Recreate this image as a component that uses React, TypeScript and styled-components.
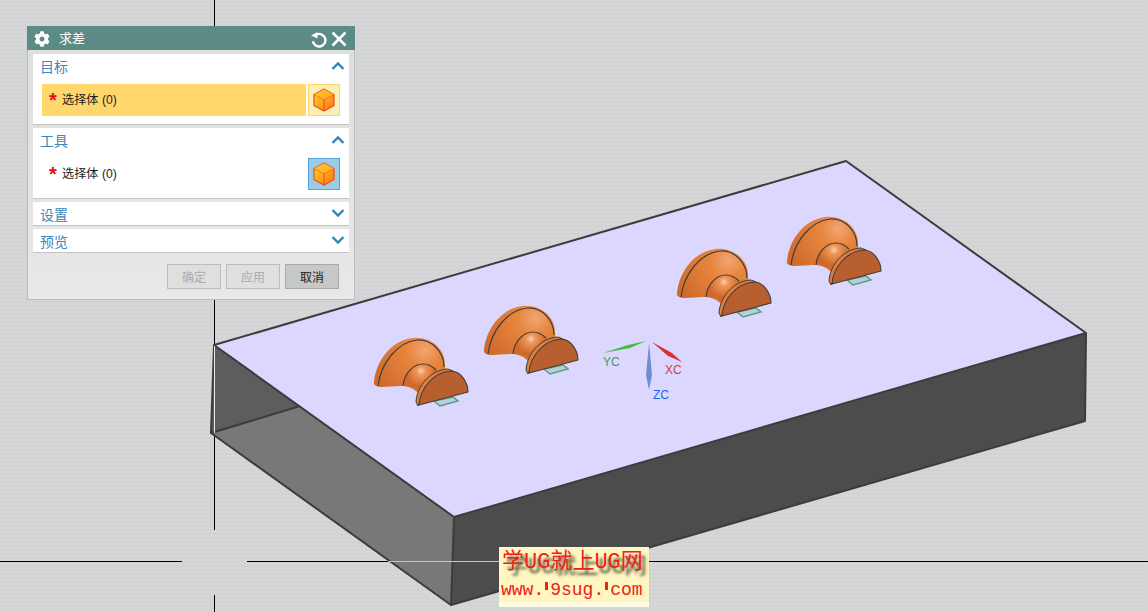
import React from "react";
import styled, { createGlobalStyle } from "styled-components";
import { FaCog } from "react-icons/fa";

const GlobalStyle = createGlobalStyle`
  html, body {
    margin: 0;
    padding: 0;
    background: #d5d6d8;
  }
`;

const CJK = `"Liberation Sans", "Noto Sans CJK SC", sans-serif`;

const Viewport = styled.div`
  position: relative;
  width: 1148px;
  height: 612px;
  overflow: hidden;
  background-color: #d5d6d8;
  background-image: radial-gradient(#cfd0d2 1px, transparent 1px);
  background-size: 4px 4px;
  font-family: ${CJK};
`;

const Canvas = styled.svg`
  display: block;
`;

const Dialog = styled.div`
  position: absolute;
  left: 27px;
  top: 26px;
  width: 328px;
  height: 274px;
  box-sizing: border-box;
  border: 1px solid #bcbcbc;
  border-top: none;
  background: linear-gradient(#dedede, #e8e8e8);
  display: flex;
  flex-direction: column;
`;

const TitleBar = styled.div`
  height: 24px;
  margin: 0 -1px;
  background: #5c8a84;
  display: flex;
  align-items: center;
  padding: 2px 7px 0 7px;
  box-sizing: border-box;
  color: #fff;
  flex-shrink: 0;
`;

const TitleText = styled.span`
  font-size: 13px;
  margin: 0 0 4px 9px;
  flex: 1;
`;

const ResetSlot = styled.span`
  display: flex;
  margin-right: 2px;
`;

const Body = styled.div`
  display: flex;
  flex-direction: column;
  gap: 3px;
  padding: 4px 5px 0;
`;

const Section = styled.div<{ $open?: boolean }>`
  height: ${(p) => (p.$open ? "71px" : "24px")};
  box-sizing: border-box;
  background: #fff;
  border-bottom: 1px solid #c4c4c4;
`;

const SectionHead = styled.div`
  height: 23px;
  padding: 0 4px 0 7px;
  display: flex;
  align-items: center;
  justify-content: space-between;
  color: #3b87b8;
  font-size: 14px;
  line-height: 23px;
`;

const SectionLabel = styled.span`
  position: relative;
  top: 2px;
`;

const Row = styled.div`
  display: flex;
  gap: 2px;
  margin: 7px 0 0 9px;
`;

const Field = styled.div<{ $active?: boolean }>`
  width: 264px;
  height: 32px;
  background: ${(p) => (p.$active ? "#ffd76c" : "#fff")};
  display: flex;
  align-items: center;
  padding: 0 0 3px 7px;
  box-sizing: border-box;
  font-size: 12.2px;
  color: #1c1c1c;
`;

const Star = styled.span`
  color: #e0101a;
  font-family: "Liberation Sans", sans-serif;
  font-weight: 700;
  font-size: 20px;
  line-height: 18px;
  width: 13px;
  position: relative;
  top: 1px;
`;

const IconButton = styled.div<{ $active?: boolean }>`
  width: 32px;
  height: 32px;
  box-sizing: border-box;
  background: ${(p) => (p.$active ? "#fbeeb6" : "#9ccbe8")};
  border: 1px solid ${(p) => (p.$active ? "#ffd76c" : "#58a6d8")};
  display: flex;
  align-items: center;
  justify-content: center;
`;

const Footer = styled.div`
  display: flex;
  justify-content: flex-end;
  gap: 5px;
  padding: 11px 15px 0 0;
`;

const ActionButton = styled.div<{ $enabled?: boolean }>`
  width: 54px;
  height: 25px;
  box-sizing: border-box;
  border: 1px solid ${(p) => (p.$enabled ? "#a9a9a9" : "#bcbcbc")};
  background: ${(p) => (p.$enabled ? "#c7c8ca" : "#dfdfdf")};
  color: ${(p) => (p.$enabled ? "#1c1c1c" : "#ababab")};
  font-size: 12px;
  display: flex;
  align-items: center;
  justify-content: center;
`;

const Badge = styled.div`
  position: absolute;
  left: 499px;
  top: 547px;
  width: 150px;
  height: 60px;
  background: linear-gradient(#fff6c2 92%, #fffbe4 92%);
  color: #ee2018;
  overflow: hidden;
`;

const BadgeTitle = styled.div`
  font-family: "Liberation Mono", "Noto Sans CJK SC", monospace;
  font-size: 22px;
  line-height: 26px;
  margin: 3px 0 0 3px;
  white-space: nowrap;
  text-shadow: 4px 5px 3px #45452a;
`;

const BadgeUrl = styled.div`
  font-family: "Liberation Mono", monospace;
  font-size: 18px;
  line-height: 18px;
  margin: 5px 0 0 2px;
  white-space: nowrap;
  display: flex;
  align-items: center;
`;

const Blot = styled.span`
  width: 3px;
  height: 8px;
  margin: 0 2px 8px 1px;
  background: #ee2018;
`;

const Chevron = ({ up }: { up?: boolean }) => (
  <svg width="14" height="9" viewBox="0 0 14 9">
    <polyline
      points={up ? "1.5,8 7,2.5 12.5,8" : "1.5,1 7,6.5 12.5,1"}
      fill="none"
      stroke="#2f86b8"
      strokeWidth="2.4"
    />
  </svg>
);

const ResetIcon = () => (
  <svg width="18" height="18" viewBox="0 0 18 18">
    <path d="M6.2 4.6 A6.3 6.3 0 1 1 2.9 11.2" fill="none" stroke="#fff" strokeWidth="2.4" />
    <path d="M1 5.5 L7.5 2 L7.5 8.5 Z" fill="#fff" />
  </svg>
);

const CloseIcon = () => (
  <svg width="18" height="18" viewBox="0 0 18 18">
    <path d="M2.5 2.5 L15.5 15.5 M15.5 2.5 L2.5 15.5" stroke="#fff" strokeWidth="2.5" />
  </svg>
);

const CubeIcon = ({ id }: { id: string }) => (
  <svg width="24" height="26" viewBox="0 0 24 26">
    <defs>
      <linearGradient id={id} x1="0" y1="0" x2="1" y2="1">
        <stop offset="0" stopColor="#ffd92e" />
        <stop offset="1" stopColor="#ff7212" />
      </linearGradient>
    </defs>
    <path d="M12 2 L22 7.5 L22 18.5 L12 24 L2 18.5 L2 7.5 Z" fill={`url(#${id})`} stroke="#ee4a18" strokeWidth="1.2" />
    <path d="M2 7.5 L12 12.5 L22 7.5 M12 12.5 L12 24" fill="none" stroke="#ee4a18" strokeWidth="1" />
    <path d="M12 2 L22 7.5 L12 12.5 L2 7.5 Z" fill="#ffb92a" opacity="0.8" />
  </svg>
);

// one revolved part; coordinates are those of the front-left part in the picture
const Part = ({ dx, dy }: { dx: number; dy: number }) => (
  <g transform={`translate(${dx} ${dy})`}>
    <path
      d="M434 401 L453 397 L458 401 L440 406 Z"
      fill="#b9cde0"
      stroke="#5b9c7c"
      strokeWidth="1.5"
    />
    <path
      d="M374 382 C376 362 390 341 412 338 C430 336 446 348 445 366 L446 372 L420 395 C414 388 408 386 401 386 L382 387 C377 387 373 385 374 382 Z"
      fill="url(#domeShade)"
    />
    <path d="M378 386 C381 362 398 342 417 340 C432 339 444 352 444 367" fill="none" stroke="#433c38" strokeWidth="1.2" />
    <path d="M403 386 C404 373 414 364 423 364 C430 364 436 368 439 373 L422 393 C416 388 410 386 403 386 Z" fill="url(#neckShade)" />
    <path d="M403 386 C404 373 414 364 423 364 C428 364 432 366 436 370" fill="none" stroke="#433c38" strokeWidth="1.2" />
    <path
      d="M416 402 C417 386 430 370 448 369 L453 371 L425 392 L419 404 L418 406 Z"
      fill="#e07c3f"
      stroke="#433c38"
      strokeWidth="1"
      strokeLinejoin="round"
    />
    <path
      d="M419 405 C420 388 434 372 451 371 C461 371 468 383 468 392 Z"
      fill="#b85f30"
      stroke="#433c38"
      strokeWidth="1.1"
      strokeLinejoin="round"
    />
  </g>
);

export default function App() {
  return (
    <Viewport>
      <GlobalStyle />
      <Canvas width="1148" height="612" viewBox="0 0 1148 612">
        <defs>
          <radialGradient id="domeShade" gradientUnits="userSpaceOnUse" cx="425" cy="350" r="55">
            <stop offset="0" stopColor="#f2a673" />
            <stop offset="0.3" stopColor="#e8873f" />
            <stop offset="1" stopColor="#cf6a2c" />
          </radialGradient>
          <radialGradient id="neckShade" gradientUnits="userSpaceOnUse" cx="421" cy="371" r="15">
            <stop offset="0" stopColor="#fbd0b0" />
            <stop offset="0.3" stopColor="#ee9658" />
            <stop offset="1" stopColor="#d06a2c" />
          </radialGradient>
        </defs>

        <path d="M214.5 0 V345 M214.5 433 V530 M214.5 595 V612" stroke="#000" strokeWidth="1" />
        <path d="M0 561.5 H182 M247 561.5 H388 M649 561.5 H1148" stroke="#000" strokeWidth="1" />

        <path d="M214 345 L300 406 L211 433 Z" fill="#5d5d5d" />
        <path d="M211 433 L300 406 L454 517 L451 605 Z" fill="#787878" />
        <path d="M454 517 L1086 333 L1085 421 L451 605 Z" fill="#4c4c4c" />
        <path d="M214 345 L846 161 L1086 333 L454 517 Z" fill="#dbd7ff" />

        <g fill="none" stroke="#3c3c3c" strokeWidth="2" strokeLinejoin="round">
          <path d="M214 345 L846 161 L1086 333 L454 517 Z" />
          <path d="M214 345 L211 433 L451 605 L454 517" />
          <path d="M451 605 L1085 421 L1086 333" />
          <path d="M211 433 L300 406" />
        </g>

        <path d="M214.5 346 V433" stroke="#e8e8e8" strokeWidth="1" />
        <path d="M388 561.5 H499" stroke="#c4c4c4" strokeWidth="1" />

        <Part dx={0} dy={0} />
        <Part dx={110} dy={-32} />
        <Part dx={303} dy={-89} />
        <Part dx={413} dy={-121} />

        <path d="M603 353 L628 345 L646 341 L630 348 Z" fill="#3fbf3f" />
        <path d="M652 342 L672 353 L682 362 L668 356 Z" fill="#d8323a" />
        <path d="M649 343 L652 375 L649 390 L646 375 Z" fill="#6b8fd0" />
        <g fontFamily='"Liberation Sans", sans-serif' fontSize="12">
          <text x="603" y="366" fill="#3f9e52">YC</text>
          <text x="665" y="374" fill="#d03c46">XC</text>
          <text x="653" y="399" fill="#1f62ee">ZC</text>
        </g>
      </Canvas>

      <Dialog>
        <TitleBar>
          <FaCog size={16} />
          <TitleText>求差</TitleText>
          <ResetSlot>
            <ResetIcon />
          </ResetSlot>
          <CloseIcon />
        </TitleBar>
        <Body>
          <Section $open>
            <SectionHead>
              <SectionLabel>目标</SectionLabel>
              <Chevron up />
            </SectionHead>
            <Row>
              <Field $active>
                <Star>*</Star>
                选择体 (0)
              </Field>
              <IconButton $active>
                <CubeIcon id="cubeA" />
              </IconButton>
            </Row>
          </Section>
          <Section $open>
            <SectionHead>
              <SectionLabel>工具</SectionLabel>
              <Chevron up />
            </SectionHead>
            <Row>
              <Field>
                <Star>*</Star>
                选择体 (0)
              </Field>
              <IconButton>
                <CubeIcon id="cubeB" />
              </IconButton>
            </Row>
          </Section>
          <Section>
            <SectionHead>
              <SectionLabel>设置</SectionLabel>
              <Chevron />
            </SectionHead>
          </Section>
          <Section>
            <SectionHead>
              <SectionLabel>预览</SectionLabel>
              <Chevron />
            </SectionHead>
          </Section>
        </Body>
        <Footer>
          <ActionButton>确定</ActionButton>
          <ActionButton>应用</ActionButton>
          <ActionButton $enabled>取消</ActionButton>
        </Footer>
      </Dialog>

      <Badge>
        <BadgeTitle>学UG就上UG网</BadgeTitle>
        <BadgeUrl>
          www.
          <Blot />
          9sug.
          <Blot />
          com
        </BadgeUrl>
      </Badge>
    </Viewport>
  );
}
